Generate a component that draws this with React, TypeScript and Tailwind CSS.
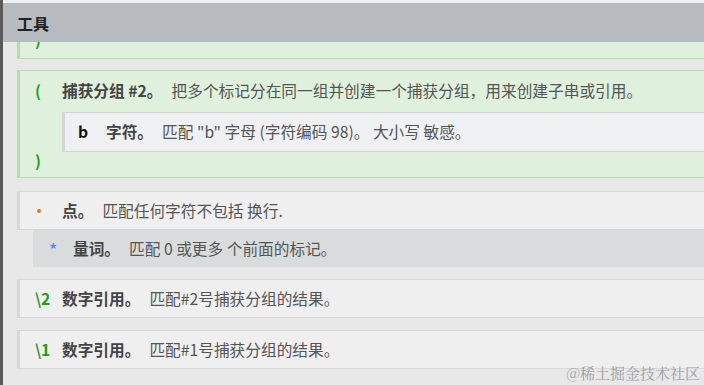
import React from 'react';

const font = { fontFamily: '"Noto Sans CJK SC", "Noto Sans", sans-serif' };

function Row({
  mark,
  markClass,
  title,
  desc,
  className = '',
}: {
  mark: React.ReactNode;
  markClass: string;
  title: string;
  desc: string;
  className?: string;
}) {
  return (
    <div className={`flex items-center whitespace-nowrap ${className}`}>
      <span className={`w-[27px] shrink-0 ${markClass}`}>{mark}</span>
      <span className="font-bold text-[#444]">{title}</span>
      <span className="ml-[9px] text-[#555]">{desc}</span>
    </div>
  );
}

export default function App() {
  return (
    <div
      className="relative w-[704px] h-[385px] overflow-hidden bg-[#e8e8e9] border-l-[3px] border-[#5a5a5a] text-[15.7px] leading-[20px]"
      style={font}
    >
      <div className="h-[3px] bg-[#eff0f1]" />
      <div className="h-[39px] bg-[#b7bbbf] flex items-center pl-[14px]">
        <span className="font-bold text-[16px] text-[#222]">工具</span>
      </div>

      {/* tail of previous group */}
      <div className="ml-[14px] h-[17px] overflow-hidden bg-[#dff0dc] border-l-[3px] border-b border-[#b3deab]">
        <div className="-mt-[12px] pl-[15px] font-bold text-[#1f9e1f]">)</div>
      </div>

      {/* capture group */}
      <div className="ml-[14px] mt-[11px] bg-[#dff0dc] border-l-[3px] border-y border-[#b3deab] pt-[10px] pb-[7px]">
        <Row
          mark="("
          markClass="pl-[15px] w-[42px] font-bold text-[#1f9e1f]"
          title="捕获分组 #2。"
          desc="把多个标记分在同一组并创建一个捕获分组，用来创建子串或引用。"
        />
        <div className="ml-[42px] mt-[11px] h-[40px] bg-[#eff0f1] border-l-[3px] border-y border-[#d3d5d6] flex items-center pl-[13px]">
          <Row
            mark="b"
            markClass="w-[28px] font-bold text-[#111]"
            title="字符。"
            desc={'匹配 "b" 字母 (字符编码 98)。 大小写 敏感。'}
          />
        </div>
        <div className="pl-[15px] h-[18px] flex items-center font-bold text-[#1f9e1f]">)</div>
      </div>

      {/* dot + quantifier */}
      <div className="ml-[14px] mt-[13px] h-[39px] bg-[#efeff0] border-l-[3px] border-y border-[#d8d8da] flex items-center">
        <Row
          mark={<span className="ml-[17px] block w-[4px] h-[4px] rounded-full bg-[#e07a1f]" />}
          markClass="w-[42px] flex items-center"
          title="点。"
          desc="匹配任何字符不包括 换行."
        />
      </div>
      <div className="ml-[30px] h-[37px] bg-[#d8dcdc] flex items-center">
        <Row
          mark="*"
          markClass="pl-[16px] w-[40px] text-[18px] text-[#5a7fe6]"
          title="量词。"
          desc="匹配 0 或更多 个前面的标记。"
        />
      </div>

      {/* backrefs */}
      <div className="ml-[14px] mt-[12px] h-[39px] bg-[#efeff0] border-l-[3px] border-y border-[#d8d8da] flex items-center">
        <Row
          mark="\2"
          markClass="pl-[15px] w-[42px] font-bold text-[#1f9e1f]"
          title="数字引用。"
          desc="匹配#2号捕获分组的结果。"
        />
      </div>
      <div className="ml-[14px] mt-[12px] h-[39px] bg-[#efeff0] border-l-[3px] border-y border-[#d8d8da] flex items-center">
        <Row
          mark="\1"
          markClass="pl-[15px] w-[42px] font-bold text-[#1f9e1f]"
          title="数字引用。"
          desc="匹配#1号捕获分组的结果。"
        />
      </div>

      <div
        className="absolute right-[4px] bottom-[2px] text-[15px] text-[#a0a0a4]"
        style={{ fontFamily: '"Noto Serif CJK SC", "Noto Sans CJK SC", serif' }}
      >
        @稀土掘金技术社区
      </div>
    </div>
  );
}
